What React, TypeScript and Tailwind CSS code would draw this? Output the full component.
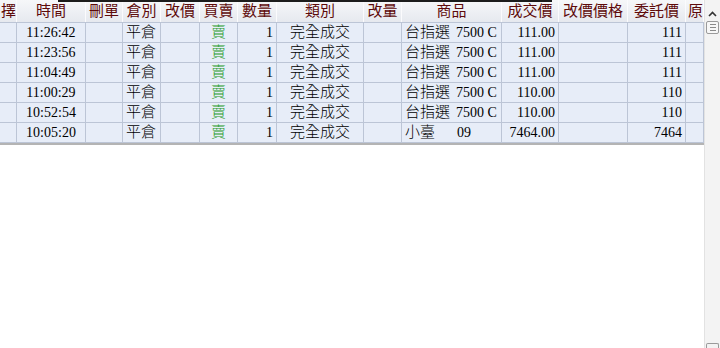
import React from "react";

const cols = "grid-cols-[17px_69px_37px_38px_39px_38px_39px_87px_38px_100px_57px_69px_58px_18px]";

const headers = ["擇", "時間", "刪單", "倉別", "改價", "買賣", "數量", "類別", "改量", "商品", "成交價", "改價價格", "委託價", "原"];

type Row = { time: string; product: string; code: string; price: string; order: string };

const rows: Row[] = [
  { time: "11:26:42", product: "台指選", code: "7500 C", price: "111.00", order: "111" },
  { time: "11:23:56", product: "台指選", code: "7500 C", price: "111.00", order: "111" },
  { time: "11:04:49", product: "台指選", code: "7500 C", price: "111.00", order: "111" },
  { time: "11:00:29", product: "台指選", code: "7500 C", price: "110.00", order: "110" },
  { time: "10:52:54", product: "台指選", code: "7500 C", price: "110.00", order: "110" },
  { time: "10:05:20", product: "小臺", code: "09", price: "7464.00", order: "7464" },
];

const font = "font-['Liberation_Serif','Noto_Sans_CJK_TC',serif] font-light";
const cell = "h-[20px] border-r border-b border-[#bcc5d6] flex items-center overflow-hidden whitespace-nowrap leading-none";

export default function App() {
  return (
    <div className={`flex w-[720px] h-[348px] bg-white ${font} text-black overflow-hidden`}>
      <div className="relative w-[704px] flex flex-col">
        <div className="absolute left-[58px] top-0 w-[494px] h-[2px] bg-[#1c1c1c]" />
        <div className={`grid ${cols} h-[23px] bg-gradient-to-b from-[#f6f7f9] to-[#e6e9ef] border-b border-[#bcc5d6]`}>
          {headers.map((h, i) => (
            <div
              key={h}
              className={`flex items-center overflow-hidden whitespace-nowrap border-r border-[#fbfbfd] text-[15px] font-normal text-[#5e0a0a] leading-none ${
                i === 0 ? "justify-end" : i === 13 ? "justify-start pl-[2px]" : "justify-center"
              }`}
            >
              {h}
            </div>
          ))}
        </div>
        {rows.map((r) => (
          <div key={r.time} className={`grid ${cols} bg-[#e7edf8]`}>
            <div className={cell} />
            <div className={`${cell} justify-center text-[14px]`}>{r.time}</div>
            <div className={cell} />
            <div className={`${cell} pl-[3px] text-[15px]`}>平倉</div>
            <div className={cell} />
            <div className={`${cell} justify-center text-[15px] text-[#1f9a2a]`}>賣</div>
            <div className={`${cell} justify-end pr-[3px] text-[14px]`}>1</div>
            <div className={`${cell} justify-center text-[15px]`}>完全成交</div>
            <div className={cell} />
            <div className={`${cell} pl-[3px] text-[15px]`}>
              <span className={r.product === "小臺" ? "w-[52px]" : "w-[51px]"}>{r.product}</span>
              <span className="text-[14px]">{r.code}</span>
            </div>
            <div className={`${cell} justify-end pr-[3px] text-[14px]`}>{r.price}</div>
            <div className={cell} />
            <div className={`${cell} justify-end pr-[3px] text-[14px]`}>{r.order}</div>
            <div className={cell} />
          </div>
        ))}
        <div className="h-[2px] bg-[#b4b4b4]" />
        <div className="flex-1 bg-white" />
      </div>
      <div className="w-[16px] h-full flex flex-col bg-[#f3f3f3] border-l border-[#e2e2e2]">
        <div className="mt-[7px] mx-[1px] h-[13px] flex items-center justify-center">
          <svg width="9" height="6" viewBox="0 0 9 6">
            <path d="M1 5 L4.5 1.5 L8 5" fill="none" stroke="#333" strokeWidth="1.6" />
          </svg>
        </div>
        <div className="mt-[1px] mx-[1px] h-[13px] bg-[#f7f7f7] border border-[#9a9a9a] rounded-[2px] flex flex-col items-center justify-center gap-[2px]">
          <div className="w-[6px] h-px bg-[#8a8a8a]" />
          <div className="w-[6px] h-px bg-[#8a8a8a]" />
          <div className="w-[6px] h-px bg-[#8a8a8a]" />
        </div>
        <div className="flex-1" />
        <div className="h-[5px] mx-[1px] border-t border-l border-r border-[#9a9a9a] rounded-t-[2px]" />
      </div>
    </div>
  );
}
